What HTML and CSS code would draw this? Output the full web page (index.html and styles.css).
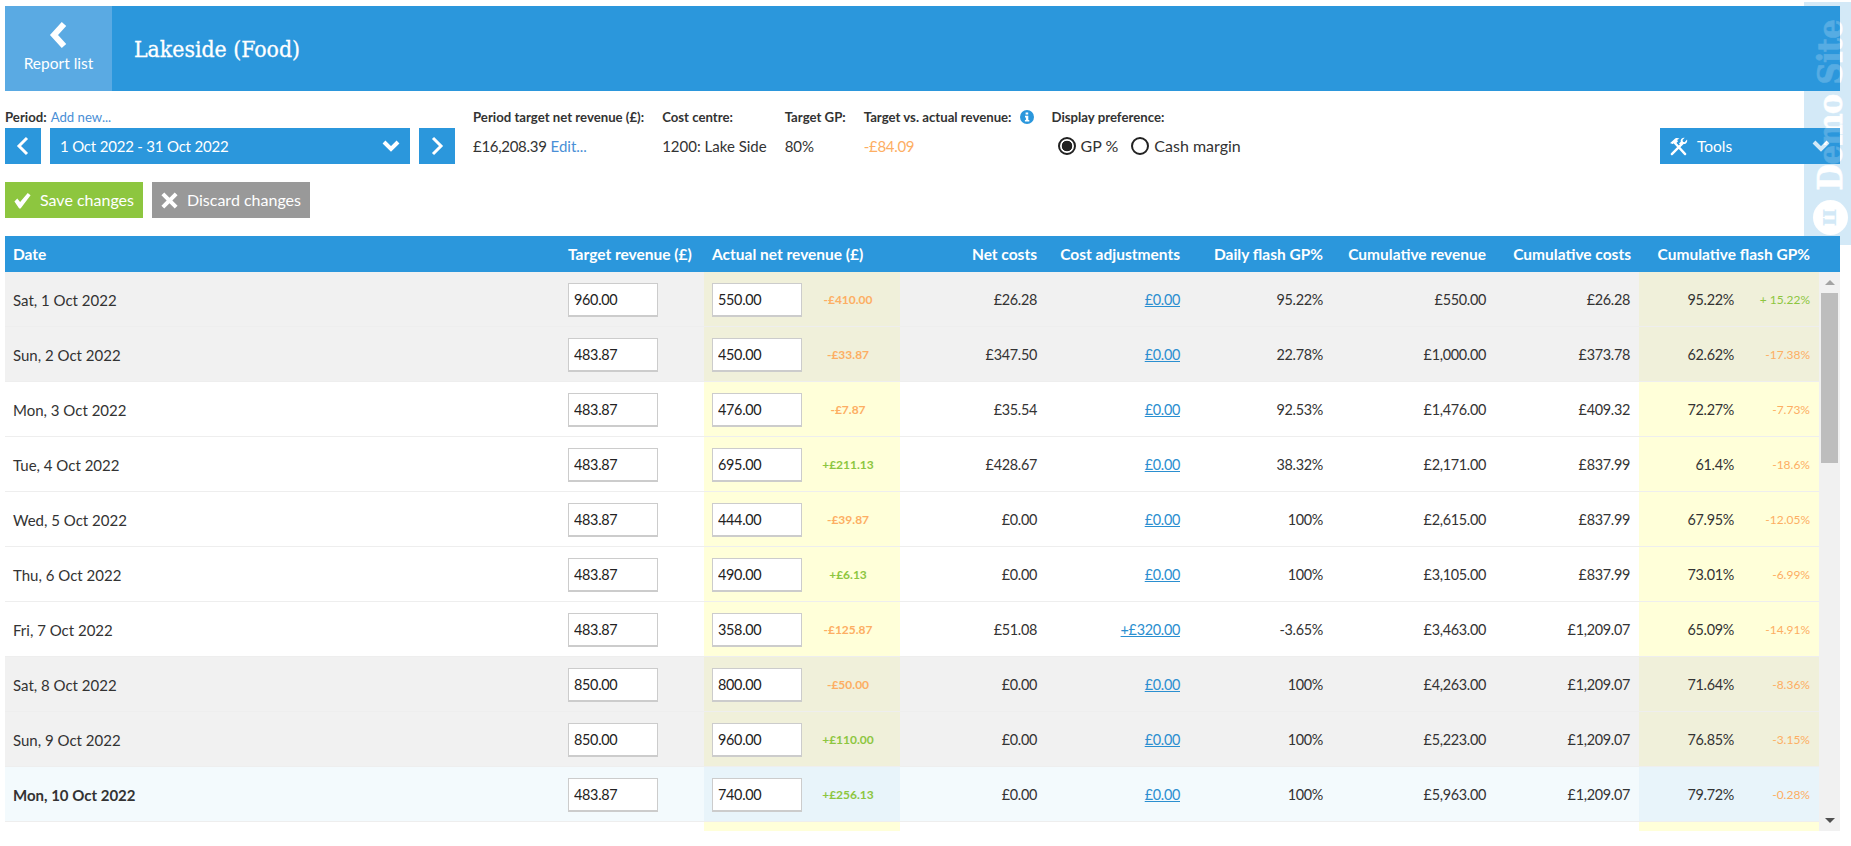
FILE: index.html
```html
<!DOCTYPE html>
<html lang="en">
<head>
<meta charset="utf-8">
<title>Lakeside (Food)</title>
<link rel="stylesheet" href="styles.css">
</head>
<body>
<header class="bar">
  <a class="back" href="#">
    <svg class="back-ico" viewBox="0 0 20 28"><path d="M15 3 5 14l10 11"/></svg>
    <span>Report list</span>
  </a>
  <h1 class="title">Lakeside (Food)</h1>
</header>

<section class="filters">
  <div class="fcol period">
    <div class="flabel">Period: <a class="link" href="#">Add new...</a></div>
    <div class="period-ctl">
      <button class="bbtn sq"><svg class="chev" viewBox="0 0 14 22"><path d="M11 3 3 11l8 8"/></svg></button>
      <button class="bbtn sel"><span>1 Oct 2022 - 31 Oct 2022</span><svg class="down" viewBox="0 0 20 14"><path d="M3 3l7 7 7-7"/></svg></button>
      <button class="bbtn sq"><svg class="chev" viewBox="0 0 14 22"><path d="M3 3l8 8-8 8"/></svg></button>
    </div>
  </div>
  <div class="fcol">
    <div class="flabel">Period target net revenue (£):</div>
    <div class="fval"><span class="tight">£16,208.39</span> <a class="link" href="#">Edit...</a></div>
  </div>
  <div class="fcol">
    <div class="flabel">Cost centre:</div>
    <div class="fval">1200: Lake Side</div>
  </div>
  <div class="fcol">
    <div class="flabel">Target GP:</div>
    <div class="fval">80%</div>
  </div>
  <div class="fcol">
    <div class="flabel">Target vs. actual revenue: <svg class="info" viewBox="0 0 14 14"><circle cx="7" cy="7" r="7"/><path class="info-i" d="M5.6 2.4h2.6v2.2H5.6zM5 5.7h3.3v4.2h1v1.7H4.9V9.9h1V7.4H5z"/></svg></div>
    <div class="fval neg-big tight">-£84.09</div>
  </div>
  <div class="fcol">
    <div class="flabel">Display preference:</div>
    <div class="fval radios">
      <label class="radio"><input type="radio" name="pref" checked> GP %</label>
      <label class="radio"><input type="radio" name="pref"> Cash margin</label>
    </div>
  </div>
  <button class="bbtn tools">
    <svg class="tool-ico" viewBox="0 0 20 20"><path class="tool-s" d="M6 6 17 18M14.500 6.500 3 18"/><path class="tool-f" d="M1 6.500 6.500 1.500c1.500-.8 3.500-.6 4.700.5-1.200 0-2.200.5-2.700 1.200l1 1.300-3 3-1.200-1.200-1.200 1-1.300-.1-.6-.6zM19 2.500c.5 1.800-.1 3.400-1.300 4.300-1 .7-2.200.7-3.100.3L12.700 9l-2.200-2.200 1.900-1.900c-.3-1.100-.1-2.200.8-3.100.9-.8 2.100-1.200 3.300-.9l-2.300 2.300.5 1.700 1.700.5z"/></svg>
    <span class="tools-txt">Tools</span>
    <svg class="down" viewBox="0 0 20 14"><path d="M3 3l7 7 7-7"/></svg>
  </button>
</section>

<div class="actions">
  <button class="abtn save"><svg class="a-ico" viewBox="0 0 20 20"><path d="M1.500 11l3-3 3 3.500L15.500 2l3 2.500-10.500 14h-1.500z"/></svg>Save changes</button>
  <button class="abtn discard"><svg class="a-ico" viewBox="0 0 20 20"><path d="M4.500 1.500 10 7l5.500-5.500 3 3L13 10l5.500 5.500-3 3L10 13l-5.500 5.500-3-3L7 10 1.500 4.500z"/></svg>Discard changes</button>
</div>

<div class="grid head">
  <div class="c">Date</div>
  <div class="c">Target revenue (£)</div>
  <div class="c">Actual net revenue (£)</div>
  <div class="c r">Net costs</div>
  <div class="c r">Cost adjustments</div>
  <div class="c r">Daily flash GP%</div>
  <div class="c r">Cumulative revenue</div>
  <div class="c r">Cumulative costs</div>
  <div class="c r">Cumulative flash GP%</div>
</div>

<div class="tbody">
<div class="rows">
  <div class="grid row wk"><div class="c">Sat, 1 Oct 2022</div><div class="c"><input class="num" value="960.00"></div><div class="c hl"><input class="num" value="550.00"><span class="diff neg">-£410.00</span></div><div class="c r">£26.28</div><div class="c r"><a class="adj" href="#">£0.00</a></div><div class="c r">95.22%</div><div class="c r">£550.00</div><div class="c r">£26.28</div><div class="c hl flash"><span class="fv">95.22%</span><span class="fd pos">+ 15.22%</span></div></div>
  <div class="grid row wk"><div class="c">Sun, 2 Oct 2022</div><div class="c"><input class="num" value="483.87"></div><div class="c hl"><input class="num" value="450.00"><span class="diff neg">-£33.87</span></div><div class="c r">£347.50</div><div class="c r"><a class="adj" href="#">£0.00</a></div><div class="c r">22.78%</div><div class="c r">£1,000.00</div><div class="c r">£373.78</div><div class="c hl flash"><span class="fv">62.62%</span><span class="fd neg">-17.38%</span></div></div>
  <div class="grid row"><div class="c">Mon, 3 Oct 2022</div><div class="c"><input class="num" value="483.87"></div><div class="c hl"><input class="num" value="476.00"><span class="diff neg">-£7.87</span></div><div class="c r">£35.54</div><div class="c r"><a class="adj" href="#">£0.00</a></div><div class="c r">92.53%</div><div class="c r">£1,476.00</div><div class="c r">£409.32</div><div class="c hl flash"><span class="fv">72.27%</span><span class="fd neg">-7.73%</span></div></div>
  <div class="grid row"><div class="c">Tue, 4 Oct 2022</div><div class="c"><input class="num" value="483.87"></div><div class="c hl"><input class="num" value="695.00"><span class="diff pos">+£211.13</span></div><div class="c r">£428.67</div><div class="c r"><a class="adj" href="#">£0.00</a></div><div class="c r">38.32%</div><div class="c r">£2,171.00</div><div class="c r">£837.99</div><div class="c hl flash"><span class="fv">61.4%</span><span class="fd neg">-18.6%</span></div></div>
  <div class="grid row"><div class="c">Wed, 5 Oct 2022</div><div class="c"><input class="num" value="483.87"></div><div class="c hl"><input class="num" value="444.00"><span class="diff neg">-£39.87</span></div><div class="c r">£0.00</div><div class="c r"><a class="adj" href="#">£0.00</a></div><div class="c r">100%</div><div class="c r">£2,615.00</div><div class="c r">£837.99</div><div class="c hl flash"><span class="fv">67.95%</span><span class="fd neg">-12.05%</span></div></div>
  <div class="grid row"><div class="c">Thu, 6 Oct 2022</div><div class="c"><input class="num" value="483.87"></div><div class="c hl"><input class="num" value="490.00"><span class="diff pos">+£6.13</span></div><div class="c r">£0.00</div><div class="c r"><a class="adj" href="#">£0.00</a></div><div class="c r">100%</div><div class="c r">£3,105.00</div><div class="c r">£837.99</div><div class="c hl flash"><span class="fv">73.01%</span><span class="fd neg">-6.99%</span></div></div>
  <div class="grid row"><div class="c">Fri, 7 Oct 2022</div><div class="c"><input class="num" value="483.87"></div><div class="c hl"><input class="num" value="358.00"><span class="diff neg">-£125.87</span></div><div class="c r">£51.08</div><div class="c r"><a class="adj" href="#">+£320.00</a></div><div class="c r">-3.65%</div><div class="c r">£3,463.00</div><div class="c r">£1,209.07</div><div class="c hl flash"><span class="fv">65.09%</span><span class="fd neg">-14.91%</span></div></div>
  <div class="grid row wk"><div class="c">Sat, 8 Oct 2022</div><div class="c"><input class="num" value="850.00"></div><div class="c hl"><input class="num" value="800.00"><span class="diff neg">-£50.00</span></div><div class="c r">£0.00</div><div class="c r"><a class="adj" href="#">£0.00</a></div><div class="c r">100%</div><div class="c r">£4,263.00</div><div class="c r">£1,209.07</div><div class="c hl flash"><span class="fv">71.64%</span><span class="fd neg">-8.36%</span></div></div>
  <div class="grid row wk"><div class="c">Sun, 9 Oct 2022</div><div class="c"><input class="num" value="850.00"></div><div class="c hl"><input class="num" value="960.00"><span class="diff pos">+£110.00</span></div><div class="c r">£0.00</div><div class="c r"><a class="adj" href="#">£0.00</a></div><div class="c r">100%</div><div class="c r">£5,223.00</div><div class="c r">£1,209.07</div><div class="c hl flash"><span class="fv">76.85%</span><span class="fd neg">-3.15%</span></div></div>
  <div class="grid row today"><div class="c day">Mon, 10 Oct 2022</div><div class="c"><input class="num" value="483.87"></div><div class="c hl"><input class="num" value="740.00"><span class="diff pos">+£256.13</span></div><div class="c r">£0.00</div><div class="c r"><a class="adj" href="#">£0.00</a></div><div class="c r">100%</div><div class="c r">£5,963.00</div><div class="c r">£1,209.07</div><div class="c hl flash"><span class="fv">79.72%</span><span class="fd neg">-0.28%</span></div></div>
  <div class="grid rest"><div class="c"></div><div class="c"></div><div class="c hl"></div><div class="c"></div><div class="c"></div><div class="c"></div><div class="c"></div><div class="c"></div><div class="c hl"></div></div>
</div>
<div class="sbar">
  <span class="arrow up"></span>
  <span class="thumb"></span>
  <span class="arrow dn"></span>
</div>
</div>

<aside class="demo">
  <span class="demo-txt">Demo Site</span>
  <span class="demo-pi">π</span>
</aside>
</body>
</html>
```
FILE: styles.css
```css
* { box-sizing: border-box; }
html, body { height: 100%; }
body {
  margin: 0;
  padding: 6px 11px 0 5px;
  overflow: hidden;
  background: #fff;
  color: #333;
  font: 15px/20px Lato, "Noto Sans", sans-serif;
}
button { font: inherit; border: 0; cursor: pointer; color: #fff; padding: 0; }
a { text-decoration: none; }
.tight { letter-spacing: -.3px; }

.bar {
  display: flex;
  align-items: center;
  height: 85px;
  background: #2b97dc;
  color: #fff;
}
.back {
  display: flex;
  flex-direction: column;
  align-items: center;
  justify-content: center;
  width: 107px;
  height: 100%;
  padding-bottom: 3px;
  background: #5aaae3;
  color: #fff;
  font-size: 15.500px;
}
.back-ico { width: 20px; height: 28px; fill: none; stroke: #fff; stroke-width: 6; margin-bottom: 4px; }
.title { margin: 0 0 0 22px; font: 400 22.800px/28px "DejaVu Serif Condensed", "DejaVu Serif", serif; -webkit-text-stroke: .3px #fff; }

.filters { display: flex; gap: 18px; height: 91px; padding-top: 15px; }
.fcol { display: flex; flex-direction: column; }
.flabel { font-size: 13.200px; font-weight: 700; line-height: 20px; height: 22px; white-space: nowrap; display: flex; align-items: center; gap: 4px; }
.flabel .link { font-weight: 400; }
.fval { height: 36px; display: flex; align-items: center; gap: 4px; white-space: nowrap; }
.link { color: #4a8fd6; }
.neg-big { color: #fdae63; }
.info { width: 14px; height: 14px; margin-left: 4px; }
.info circle { fill: #2b97dc; }
.info-i { fill: #fff; }
.period { width: 450px; }
.period-ctl { display: flex; gap: 9px; height: 36px; }
.bbtn { background: #2b97dc; height: 36px; display: flex; align-items: center; }
.sq { width: 36px; justify-content: center; }
.chev { width: 14px; height: 22px; fill: none; stroke: #fff; stroke-width: 3; }
.sel { flex: 1; justify-content: space-between; padding: 0 9px 0 10px; letter-spacing: -.2px; }
.down { width: 20px; height: 14px; fill: none; stroke: #fff; stroke-width: 4; }
.radios { gap: 13px; padding-left: 6px; }
.radio { display: flex; align-items: center; gap: 5px; font-size: 16px; }
.radio input {
  appearance: none;
  margin: 0;
  width: 18px;
  height: 18px;
  border: 2px solid #222;
  border-radius: 50%;
  background: #fff;
}
.radio input:checked { background: radial-gradient(circle, #222 0 5px, #fff 5.600px); }
.tools { width: 180px; height: 36px; margin-top: 22px; margin-left: auto; padding: 0 9px; gap: 9px; font-size: 15.500px; }
.tool-ico { width: 19px; height: 19px; }
.tool-s { fill: none; stroke: #fff; stroke-width: 2.500; stroke-linecap: round; }
.tool-f { fill: #fff; }
.tools-txt { flex: 1; text-align: left; }

.actions { display: flex; gap: 9px; height: 54px; }
.abtn { height: 36px; display: flex; align-items: center; gap: 8px; padding: 0 9px 0 8px; font-size: 16px; }
.a-ico { width: 19px; height: 19px; fill: #fff; }
.save { width: 138px; background: #8dc63f; }
.discard { width: 158px; background: #999; }

.grid {
  display: grid;
  grid-template-columns: 555px 144px 196px 145px 143px 143px 163px 145px 180px;
}
.head {
  height: 36px;
  padding-right: 21px;
  background: #2b97dc;
  color: #fff;
  font-weight: 700;
  font-size: 15.500px;
}
.c { display: flex; align-items: center; padding: 0 8px; white-space: nowrap; min-width: 0; }
.r { justify-content: flex-end; }
.head .c:last-child { padding-right: 9px; }
.row > .c { padding-top: 2px; }
.row > .c:nth-child(8) { padding-right: 9px; }
.row > .c:not(:first-child) { font-size: 14.400px; letter-spacing: -.3px; }

.tbody { display: flex; height: 559px; }
.rows { width: 1814px; }
.sbar { display: flex; flex-direction: column; width: 21px; background: #f1f1f1; }
.arrow { height: 21px; display: flex; align-items: center; justify-content: center; }
.arrow::before { content: ""; border: solid transparent; border-width: 5px 5px; }
.up::before { border-top-width: 0; border-bottom-color: #a3a3a3; }
.dn { margin-top: auto; }
.dn::before { border-bottom-width: 0; border-top-color: #505050; }
.thumb { width: 17px; height: 170px; margin-left: 2px; background: #bdbdbd; }

.row { height: 55px; border-bottom: 1px solid #eee; }
.hl { background: #ffffd9; }
.wk { background: #f1f1f1; }
.wk .hl { background: #f0f0da; }
.today { background: #f3fafd; }
.today .hl { background: #e8f4fa; }
.day { font-weight: 700; }
.rest { height: 9px; }

.num {
  width: 90px;
  height: 34px;
  padding: 0 5px;
  border: 1px solid #ccc;
  border-bottom-width: 2px;
  background: #fff;
  color: #222;
  font: 14.400px Lato, "Noto Sans", sans-serif;
  letter-spacing: -.3px;
  flex: none;
}
.diff { flex: 1; text-align: center; padding-left: 2px; font-size: 12px; font-weight: 700; }
.neg { color: #fdae63; }
.pos { color: #8dc63f; }
.adj { color: #2b8fd0; text-decoration: underline; }
.row > .flash { padding: 2px 9px 0 0; justify-content: space-between; }
.fv { width: 95px; text-align: right; }
.row > .c .fd, .row > .c .diff { font-size: 12px; letter-spacing: 0; }

.demo {
  position: absolute;
  top: 2px;
  left: 1804px;
  width: 47px;
  height: 243px;
  background: #2b97dc;
  opacity: .2;
  color: #fff;
  pointer-events: none;
}
.demo-txt {
  position: absolute;
  top: 18px;
  left: 7px;
  writing-mode: vertical-rl;
  transform: rotate(180deg);
  font: 700 34px/38px "DejaVu Serif Condensed", "DejaVu Serif", serif;
  letter-spacing: -.7px;
  white-space: nowrap;
  -webkit-text-stroke: .6px #fff;
}
.demo-pi {
  position: absolute;
  left: 9px;
  top: 198px;
  width: 35px;
  height: 35px;
  border-radius: 50%;
  background: #fff;
  color: #2b97dc;
  font: 700 24px/33px "DejaVu Serif", serif;
  text-align: center;
  transform: rotate(90deg);
}
```
